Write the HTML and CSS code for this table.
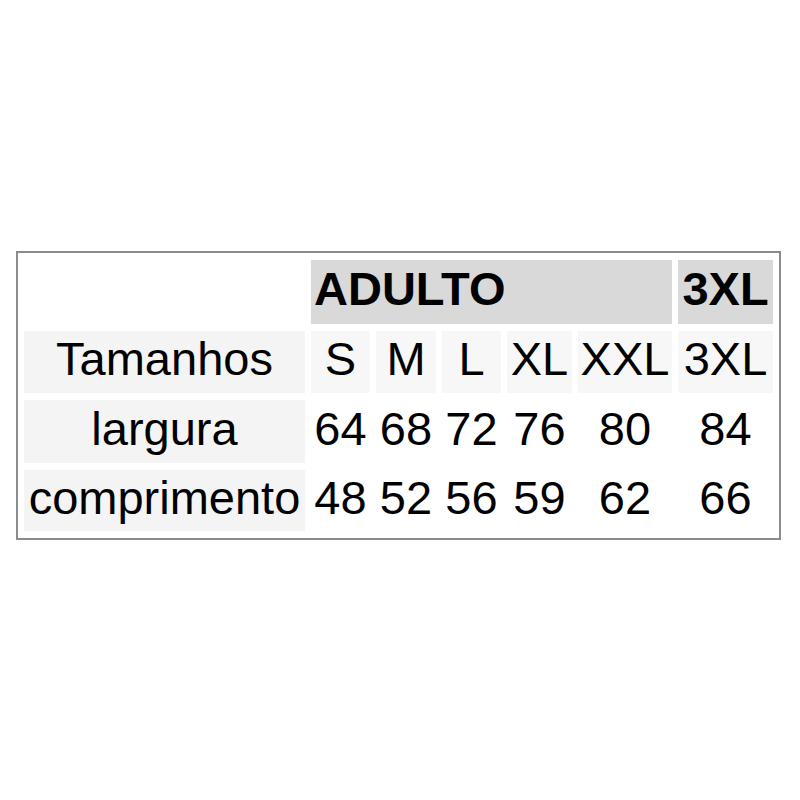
FILE: index.html
```html
<!DOCTYPE html>
<html lang="pt">
<head>
<meta charset="utf-8">
<title>Tabela de tamanhos</title>
<link rel="stylesheet" href="styles.css">
</head>
<body>
<div class="page">
  <table class="sizes">
    <colgroup>
      <col class="c-label">
      <col class="c-s">
      <col class="c-m">
      <col class="c-l">
      <col class="c-xl">
      <col class="c-xxl">
      <col class="c-3xl">
    </colgroup>
    <tr class="row-head">
      <td class="blank"></td>
      <th class="group" colspan="5">ADULTO</th>
      <th class="group center">3XL</th>
    </tr>
    <tr class="row-sizes">
      <td class="label">Tamanhos</td>
      <td class="size">S</td>
      <td class="size">M</td>
      <td class="size">L</td>
      <td class="size">XL</td>
      <td class="size">XXL</td>
      <td class="size">3XL</td>
    </tr>
    <tr class="row-data row-a">
      <td class="label">largura</td>
      <td>64</td>
      <td>68</td>
      <td>72</td>
      <td>76</td>
      <td>80</td>
      <td>84</td>
    </tr>
    <tr class="row-data row-b">
      <td class="label">comprimento</td>
      <td>48</td>
      <td>52</td>
      <td>56</td>
      <td>59</td>
      <td>62</td>
      <td>66</td>
    </tr>
  </table>
</div>
</body>
</html>
```

FILE: styles.css
```css
html, body {
  margin: 0;
  padding: 0;
  background: #ffffff;
}

.page {
  padding: 251px 0 0 16px;
}

.sizes {
  border: 2px solid #8c8c8c;
  border-collapse: separate;
  border-spacing: 6px 7px;
  table-layout: fixed;
  width: 763px;
  font-family: Arial, "Liberation Sans", sans-serif;
  font-size: 47px;
  color: #000;
}

.c-label { width: 281px; }
.c-s { width: 59px; }
.c-m { width: 60px; }
.c-l { width: 59px; }
.c-xl { width: 65px; }
.c-xxl { width: 94px; }
.c-3xl { width: 95px; }

.sizes td,
.sizes th {
  padding: 0 0 6px 0;
  text-align: center;
  vertical-align: middle;
  white-space: nowrap;
  line-height: 54px;
}

.row-head { height: 64px; }
.row-sizes { height: 62px; }
.row-a { height: 63px; }
.row-b { height: 61px; }

.sizes th.group {
  background: #d9d9d9;
  font-weight: bold;
  text-align: left;
  padding-left: 3px;
}

.sizes th.center {
  text-align: center;
  padding-left: 0;
}

.blank {
  background: transparent;
}

.label {
  background: #f4f4f4;
}

.size {
  background: #f7f7f7;
}
```
